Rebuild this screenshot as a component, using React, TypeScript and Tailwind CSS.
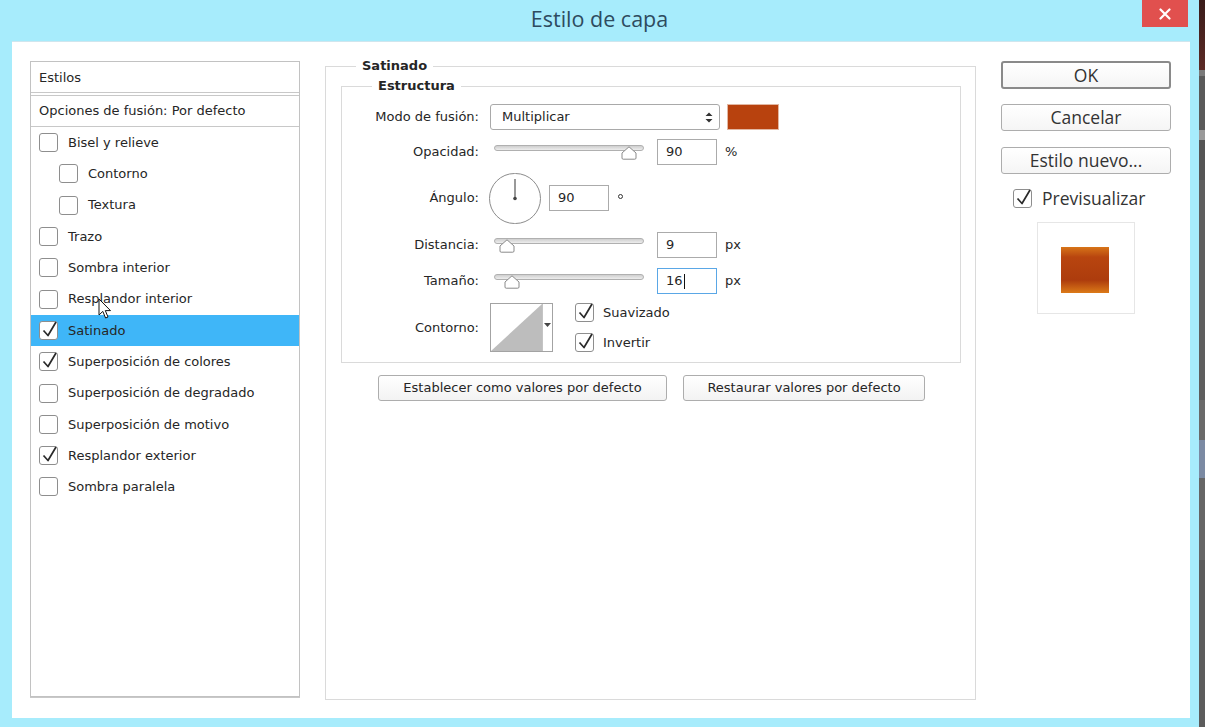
import React from 'react';

type StyleItem = {
  label: string;
  indent?: boolean;
  checked?: boolean;
  selected?: boolean;
};

const styleItems: StyleItem[] = [
  { label: 'Bisel y relieve' },
  { label: 'Contorno', indent: true },
  { label: 'Textura', indent: true },
  { label: 'Trazo' },
  { label: 'Sombra interior' },
  { label: 'Resplandor interior' },
  { label: 'Satinado', checked: true, selected: true },
  { label: 'Superposición de colores', checked: true },
  { label: 'Superposición de degradado' },
  { label: 'Superposición de motivo' },
  { label: 'Resplandor exterior', checked: true },
  { label: 'Sombra paralela' },
];

function CheckBox({ checked }: { checked?: boolean }) {
  return (
    <span className="relative w-[19px] h-[19px] shrink-0 rounded-[3px] border border-[#8e8e8e] bg-white">
      {checked && (
        <svg className="absolute left-[1px] top-[-3px] overflow-visible" width="17" height="20" viewBox="0 0 17 20">
          <path d="M2.5 11.5 L7 16.5 L15 3" fill="none" stroke="#2a2a2a" strokeWidth="1.7" strokeLinejoin="round" />
        </svg>
      )}
    </span>
  );
}

// slider with house-shaped thumb; pos is thumb centre in px from track start
function Slider({ pos }: { pos: number }) {
  return (
    <div className="relative w-[160px] h-[26px]">
      <div className="absolute left-[4px] top-[6px] w-[150px] h-[6px] rounded-full border border-[#b0b0b0] bg-gradient-to-b from-[#cfcfcf] to-[#ededed]" />
      <svg className="absolute top-[7px]" style={{ left: pos - 8 + 4 }} width="16" height="14" viewBox="0 0 16 14">
        <path d="M8 0.8 L15 7 L15 12 Q15 13.2 13.8 13.2 L2.2 13.2 Q1 13.2 1 12 L1 7 Z" fill="#ffffff" stroke="#8a8a8a" strokeWidth="1" />
      </svg>
    </div>
  );
}

function NumberBox({ value, focused }: { value: string; focused?: boolean }) {
  return (
    <div
      className={`w-[60px] h-[26px] flex items-center pl-[8px] bg-white border ${
        focused ? 'border-[#5aa7e6]' : 'border-[#ababab]'
      }`}
    >
      <span>{value}</span>
      {focused && <span className="ml-[1px] w-px h-[15px] bg-[#111]" />}
    </div>
  );
}

function Label({ children }: { children: React.ReactNode }) {
  return <div className="w-[137px] shrink-0 text-right">{children}</div>;
}

function DialogButton({ children, w }: { children: React.ReactNode; w: string }) {
  return (
    <div
      className={`${w} h-[26px] flex items-center justify-center rounded-[3px] border border-[#adadad] bg-gradient-to-b from-white to-[#f3f3f3]`}
    >
      {children}
    </div>
  );
}

function RightButton({ children, primary }: { children: React.ReactNode; primary?: boolean }) {
  return (
    <div
      className={`w-[170px] flex items-center justify-center rounded-[3px] bg-gradient-to-b from-white to-[#f5f5f5] ${
        primary ? 'h-[28px] border-2 border-[#8a8a8a]' : 'h-[27px] border border-[#adadad]'
      }`}
    >
      {children}
    </div>
  );
}

export default function App() {
  return (
    <div className="w-[1205px] h-[727px] flex overflow-hidden bg-[#a7ecfc] font-['DejaVu_Sans',sans-serif] text-[13px] text-[#262626]">
      {/* Window */}
      <div className="relative w-[1199px] h-full flex flex-col bg-[#a7ecfc]">
        {/* Title bar */}
        <div className="h-[41px] shrink-0 flex items-center justify-center pb-[2px]">
          <span className="font-['Open_Sans',sans-serif] text-[21.5px] text-[#2e4b5f]">Estilo de capa</span>
        </div>
        <div className="absolute right-[11px] top-0 w-[46px] h-[27px] bg-[#e1504e] flex items-center justify-center">
          <svg width="12" height="12" viewBox="0 0 12 12">
            <path d="M1.5 1.5 L10.5 10.5 M10.5 1.5 L1.5 10.5" stroke="#ffffff" strokeWidth="2.2" strokeLinecap="round" />
          </svg>
        </div>

        {/* Client area */}
        <div className="ml-[12px] w-[1178px] h-[677px] bg-white border-t border-[#cfe6ee] flex items-start pl-[18px] pt-[16px]">
          {/* Styles list */}
          <div className="mt-[3px] w-[270px] h-[636px] border border-[#c2c2c2] shadow-[0_1px_0_#c8c8c8] flex flex-col">
            <div className="h-[31px] flex items-center pl-[8px] pt-[1px] border-b border-[#c8c8c8]">Estilos</div>
            <div className="mt-[2px] h-[32px] flex items-center pl-[8px] border-t border-b border-[#c8c8c8]">
              Opciones de fusión: Por defecto
            </div>
            {styleItems.map((it) => (
              <div
                key={it.label}
                className={`h-[31.3px] flex items-center gap-[10px] ${it.indent ? 'pl-[28px]' : 'pl-[8px]'} ${
                  it.selected ? 'bg-[#3fb6f8]' : ''
                }`}
              >
                <CheckBox checked={it.checked} />
                <span>{it.label}</span>
              </div>
            ))}
          </div>

          {/* Satinado group */}
          <fieldset className="ml-[25px] w-[651px] h-[642px] border border-[#dadada] p-0 m-0">
            <legend className="ml-[30px] px-[6px] font-bold leading-[16px]">Satinado</legend>

            <fieldset className="ml-[15px] mt-[4px] w-[620px] border border-[#dadada] p-0 m-0 pb-[10px]">
              <legend className="ml-[30px] px-[6px] font-bold leading-[16px]">Estructura</legend>

              <div className="flex flex-col pt-[10px]">
                {/* Modo de fusión */}
                <div className="h-[26px] flex items-center">
                  <Label>Modo de fusión:</Label>
                  <div className="ml-[11px] w-[230px] h-[26px] flex items-center justify-between pl-[11px] pr-[6px] rounded-[3px] border border-[#a9a9a9] bg-white">
                    <span>Multiplicar</span>
                    <svg width="8" height="11" viewBox="0 0 8 11">
                      <path d="M4 0.5 L7.5 4 L0.5 4 Z M4 10.5 L7.5 7 L0.5 7 Z" fill="#333" />
                    </svg>
                  </div>
                  <div className="ml-[7px] w-[52px] h-[26px] bg-[#b8420e] border border-[#e2b7a2]" />
                </div>

                {/* Opacidad */}
                <div className="mt-[9px] h-[26px] flex items-center">
                  <Label>Opacidad:</Label>
                  <div className="ml-[11px]">
                    <Slider pos={135} />
                  </div>
                  <div className="ml-[7px]">
                    <NumberBox value="90" />
                  </div>
                  <span className="ml-[8px]">%</span>
                </div>

                {/* Ángulo */}
                <div className="mt-[8px] h-[50px] flex items-center">
                  <Label>Ángulo:</Label>
                  <div className="ml-[10px] relative w-[52px] h-[51px] rounded-full border border-[#8c8c8c] bg-white">
                    <svg className="absolute inset-0" width="50" height="49" viewBox="0 0 50 49">
                      <line x1="25" y1="24.5" x2="25" y2="5" stroke="#555" strokeWidth="1.2" />
                      <circle cx="25" cy="24.5" r="1.8" fill="#444" />
                    </svg>
                  </div>
                  <div className="ml-[8px]">
                    <NumberBox value="90" />
                  </div>
                  <span className="ml-[9px] mb-[3px] w-[5px] h-[5px] rounded-full border border-[#333]" />
                </div>

                {/* Distancia */}
                <div className="mt-[9px] h-[26px] flex items-center">
                  <Label>Distancia:</Label>
                  <div className="ml-[11px]">
                    <Slider pos={13} />
                  </div>
                  <div className="ml-[7px]">
                    <NumberBox value="9" />
                  </div>
                  <span className="ml-[8px]">px</span>
                </div>

                {/* Tamaño */}
                <div className="mt-[10px] h-[26px] flex items-center">
                  <Label>Tamaño:</Label>
                  <div className="ml-[11px]">
                    <Slider pos={18} />
                  </div>
                  <div className="ml-[7px]">
                    <NumberBox value="16" focused />
                  </div>
                  <span className="ml-[8px]">px</span>
                </div>

                {/* Contorno */}
                <div className="mt-[9px] h-[49px] flex items-center">
                  <Label>Contorno:</Label>
                  <div className="ml-[11px] w-[63px] h-[49px] flex border border-[#a3a3a3] bg-white">
                    <svg width="51" height="47" viewBox="0 0 51 47">
                      <polygon points="0,47 51,0 51,47" fill="#bdbdbd" />
                    </svg>
                    <div className="flex-1 border-l border-[#c4c4c4] flex items-start justify-center pt-[19px]">
                      <svg width="7" height="4" viewBox="0 0 7 4">
                        <path d="M0 0 L7 0 L3.5 4 Z" fill="#444" />
                      </svg>
                    </div>
                  </div>
                  <div className="ml-[22px] flex flex-col gap-[10px]">
                    <div className="flex items-center gap-[9px]">
                      <CheckBox checked />
                      <span>Suavizado</span>
                    </div>
                    <div className="flex items-center gap-[9px]">
                      <CheckBox checked />
                      <span>Invertir</span>
                    </div>
                  </div>
                </div>
              </div>
            </fieldset>

            <div className="ml-[52px] mt-[12px] flex gap-[16px]">
              <DialogButton w="w-[289px]">Establecer como valores por defecto</DialogButton>
              <DialogButton w="w-[242px]">Restaurar valores por defecto</DialogButton>
            </div>
          </fieldset>

          {/* Right column */}
          <div className="ml-[25px] mt-[3px] w-[170px] flex flex-col font-['Open_Sans',sans-serif] text-[17.5px] text-[#333]">
            <RightButton primary>OK</RightButton>
            <div className="mt-[15px]">
              <RightButton>Cancelar</RightButton>
            </div>
            <div className="mt-[16px]">
              <RightButton>Estilo nuevo...</RightButton>
            </div>
            <div className="mt-[15px] ml-[12px] flex items-center gap-[10px] h-[19px]">
              <CheckBox checked />
              <span>Previsualizar</span>
            </div>
            <div className="mt-[14px] ml-[36px] w-[98px] h-[92px] border border-[#e6e6e6] pt-[24px] pl-[23px]">
              <div className="w-[48px] h-[46px] bg-[linear-gradient(to_bottom,#d77418_0%,#b8450f_22%,#ad3c0d_72%,#dc7a18_100%)]" />
            </div>
          </div>
        </div>

        {/* mouse pointer */}
        <svg className="absolute left-[98px] top-[298px]" width="14" height="22" viewBox="0 0 14 22">
          <path d="M1 1 L1 17 L4.8 13.4 L7.6 20 L10 19 L7.3 12.6 L12.5 12.6 Z" fill="#ffffff" stroke="#111" strokeWidth="1" strokeLinejoin="round" />
        </svg>
      </div>

      {/* background app strip */}
      <div className="flex-1 flex flex-col">
        <div className="h-[70px] bg-gradient-to-b from-[#3a1c1a] to-[#5c2b26]" />
        <div className="h-[6px] bg-[#7a7a7a]" />
        <div className="h-[54px] bg-[#5a5a5a]" />
        <div className="h-[10px] bg-[#9a9a9a]" />
        <div className="h-[40px] bg-[#555555]" />
        <div className="h-[220px] bg-[#5e5e5e]" />
        <div className="h-[40px] bg-[#6a6a6a]" />
        <div className="h-[38px] bg-[#7b8aa3]" />
        <div className="h-[82px] bg-[#666666]" />
        <div className="flex-1 bg-[#5c5c5c]" />
      </div>
    </div>
  );
}
